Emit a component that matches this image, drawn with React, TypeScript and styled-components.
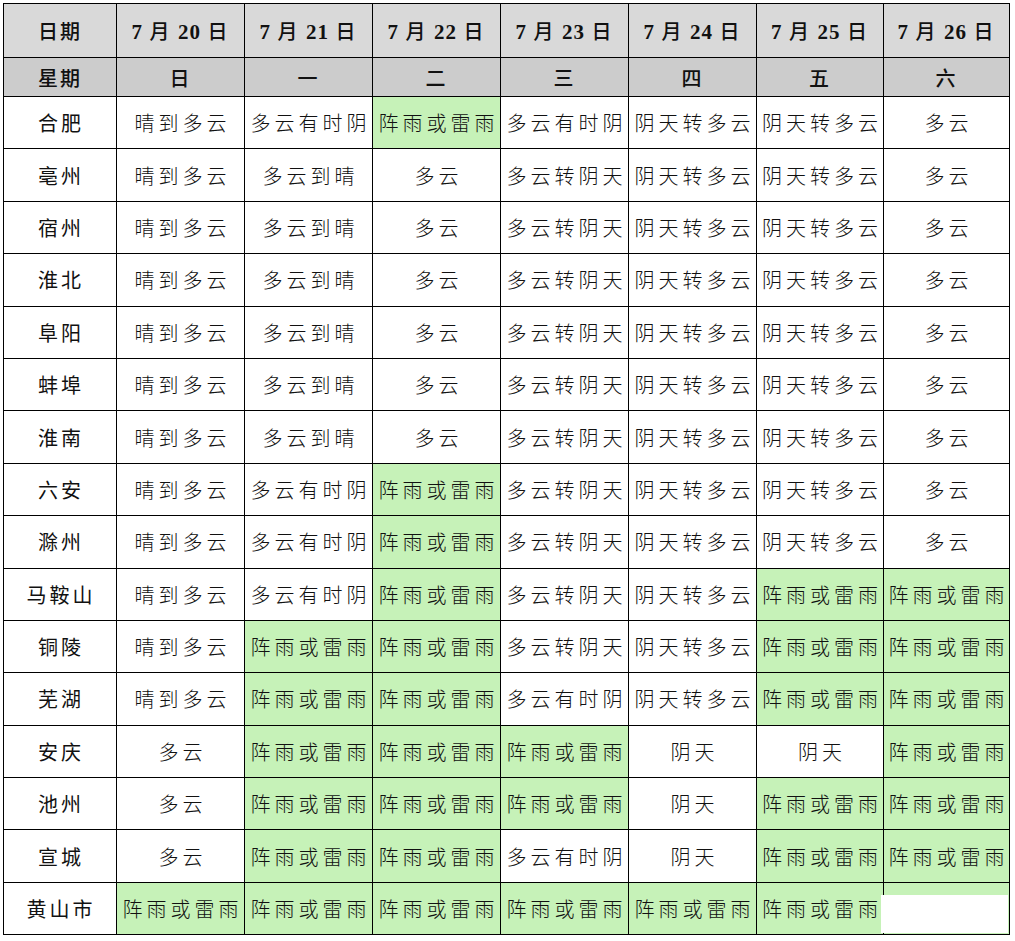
import React from 'react';
import styled, { createGlobalStyle } from 'styled-components';

const GlobalStyle = createGlobalStyle`
  html, body {
    margin: 0;
    padding: 0;
    background: #ffffff;
  }
  body {
    padding: 3px 0 0 3px;
    font-family: "Liberation Serif", "Noto Sans CJK SC", serif;
  }
`;

type Cell = { text: string; rain?: boolean };

const dates = [20, 21, 22, 23, 24, 25, 26];
const weekdays = ['日', '一', '二', '三', '四', '五', '六'];

const R = '阵雨或雷雨';

const raw: [string, string[]][] = [
  ['合肥', ['晴到多云', '多云有时阴', R, '多云有时阴', '阴天转多云', '阴天转多云', '多云']],
  ['亳州', ['晴到多云', '多云到晴', '多云', '多云转阴天', '阴天转多云', '阴天转多云', '多云']],
  ['宿州', ['晴到多云', '多云到晴', '多云', '多云转阴天', '阴天转多云', '阴天转多云', '多云']],
  ['淮北', ['晴到多云', '多云到晴', '多云', '多云转阴天', '阴天转多云', '阴天转多云', '多云']],
  ['阜阳', ['晴到多云', '多云到晴', '多云', '多云转阴天', '阴天转多云', '阴天转多云', '多云']],
  ['蚌埠', ['晴到多云', '多云到晴', '多云', '多云转阴天', '阴天转多云', '阴天转多云', '多云']],
  ['淮南', ['晴到多云', '多云到晴', '多云', '多云转阴天', '阴天转多云', '阴天转多云', '多云']],
  ['六安', ['晴到多云', '多云有时阴', R, '多云转阴天', '阴天转多云', '阴天转多云', '多云']],
  ['滁州', ['晴到多云', '多云有时阴', R, '多云转阴天', '阴天转多云', '阴天转多云', '多云']],
  ['马鞍山', ['晴到多云', '多云有时阴', R, '多云转阴天', '阴天转多云', R, R]],
  ['铜陵', ['晴到多云', R, R, '多云转阴天', '阴天转多云', R, R]],
  ['芜湖', ['晴到多云', R, R, '多云有时阴', '阴天转多云', R, R]],
  ['安庆', ['多云', R, R, R, '阴天', '阴天', R]],
  ['池州', ['多云', R, R, R, '阴天', R, R]],
  ['宣城', ['多云', R, R, '多云有时阴', '阴天', R, R]],
  ['黄山市', [R, R, R, R, R, R, '']],
];

const rows: { city: string; cells: Cell[] }[] = raw.map(([city, list]) => ({
  city,
  cells: list.map((t, i) => ({ text: t, rain: t === R || (city === '黄山市' && i === 6) })),
}));

const colWidths = [113, 128, 128, 128, 128, 128, 127, 126];

const Table = styled.table`
  border-collapse: collapse;
  table-layout: fixed;
  width: 1006px;
  color: #111;
`;

const HeadCell = styled.th<{ $tone: 'date' | 'week' }>`
  border: 1.5px solid #000;
  background: ${({ $tone }) => ($tone === 'date' ? '#d9d9d9' : '#cccccc')};
  height: ${({ $tone }) => ($tone === 'date' ? '53px' : '38px')};
  padding: 0;
  text-align: center;
  font-family: "Noto Sans CJK SC", sans-serif;
  font-size: 20px;
  font-weight: 500;
  letter-spacing: 2px;
  white-space: nowrap;
`;

const Num = styled.span`
  font-family: "Liberation Serif", serif;
  font-weight: 700;
  font-size: 21px;
  letter-spacing: 1px;
`;

const CityCell = styled.td`
  border: 1.5px solid #000;
  background: #ffffff;
  height: 51.4px;
  padding: 0 0 0 2px;
  text-align: center;
  font-family: "Noto Sans CJK SC", sans-serif;
  font-size: 20px;
  font-weight: 400;
  letter-spacing: 3px;
  white-space: nowrap;
`;

const WeatherCell = styled.td<{ $rain?: boolean }>`
  position: relative;
  border: 1.5px solid #000;
  background: ${({ $rain }) => ($rain ? '#c6f2b8' : '#ffffff')};
  height: 51.4px;
  padding: 0 0 0 4px;
  text-align: center;
  font-family: "Noto Sans CJK SC", sans-serif;
  font-size: 20px;
  font-weight: 300;
  letter-spacing: 4px;
  white-space: nowrap;
`;

const Patch = styled.div`
  position: absolute;
  left: -3px;
  right: 1px;
  top: 12px;
  bottom: 1px;
  background: #ffffff;
`;

export default function App() {
  return (
    <>
      <GlobalStyle />
      <Table>
        <colgroup>
          {colWidths.map((w, i) => (
            <col key={i} style={{ width: w }} />
          ))}
        </colgroup>
        <thead>
          <tr>
            <HeadCell $tone="date">日期</HeadCell>
            {dates.map(d => (
              <HeadCell key={d} $tone="date">
                <Num>7</Num> 月 <Num>{d}</Num> 日
              </HeadCell>
            ))}
          </tr>
          <tr>
            <HeadCell $tone="week">星期</HeadCell>
            {weekdays.map(w => (
              <HeadCell key={w} $tone="week">{w}</HeadCell>
            ))}
          </tr>
        </thead>
        <tbody>
          {rows.map(row => (
            <tr key={row.city}>
              <CityCell>{row.city}</CityCell>
              {row.cells.map((c, i) => (
                <WeatherCell key={i} $rain={c.rain}>
                  {c.text}
                  {row.city === '黄山市' && i === 6 && <Patch />}
                </WeatherCell>
              ))}
            </tr>
          ))}
        </tbody>
      </Table>
    </>
  );
}
